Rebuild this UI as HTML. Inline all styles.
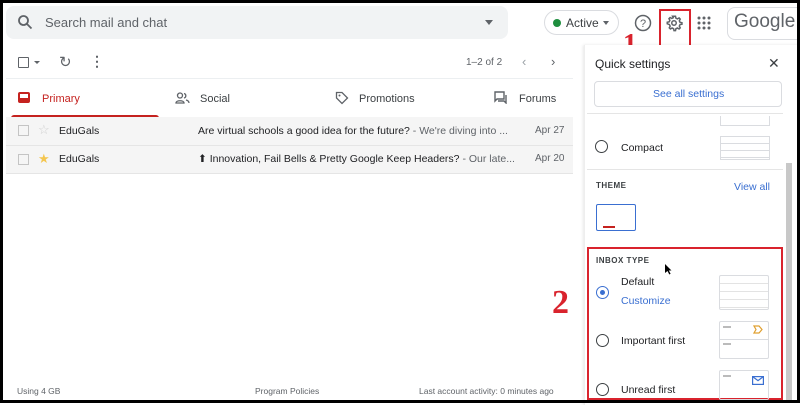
<!DOCTYPE html><html><head><style>
*{margin:0;padding:0;box-sizing:border-box}
body{width:800px;height:403px;background:#fff;position:relative;overflow:hidden;font-family:"Liberation Sans",Arial,sans-serif;color:#202124}
.a{position:absolute}
.t{position:absolute;white-space:nowrap}
</style></head><body>
<div class="a" style="left:6px;top:6px;width:502px;height:33px;background:#f1f3f4;border-radius:8px"></div>
<svg class="a" style="left:17px;top:14px" width="16" height="16" viewBox="0 0 16 16"><circle cx="6.5" cy="6.5" r="4.5" fill="none" stroke="#5f6368" stroke-width="1.8"/><path d="M10 10l4.5 4.5" stroke="#5f6368" stroke-width="1.8"/></svg>
<div class="t" style="left:45px;top:15px;font-size:13px;color:#5f6368">Search mail and chat</div>
<div class="a" style="left:485px;top:20px;border:4px solid transparent;border-top:5px solid #5f6368"></div>
<div class="a" style="left:544px;top:10px;width:75px;height:25px;border:1px solid #dadce0;border-radius:13px"></div>
<div class="a" style="left:553px;top:19px;width:8px;height:8px;border-radius:50%;background:#1e8e3e"></div>
<div class="t" style="left:566px;top:16px;font-size:12px;color:#3c4043">Active</div>
<div class="a" style="left:603px;top:21px;border:3.5px solid transparent;border-top:4px solid #5f6368"></div>
<svg class="a" style="left:634px;top:14px" width="18" height="18" viewBox="0 0 18 18"><circle cx="9" cy="9" r="7.5" fill="none" stroke="#5f6368" stroke-width="1.5"/><text x="9" y="13" font-size="11" text-anchor="middle" fill="#5f6368" font-family="Liberation Sans">?</text></svg>
<svg class="a" style="left:665px;top:14px" width="18" height="18" viewBox="0 0 24 24"><path fill="none" stroke="#5f6368" stroke-width="2" d="M12 3l2 0 .5 2.5 2 1 2.3-1.2 1.5 1.5-1.2 2.3 1 2 2.5.5v2l-2.5.5-1 2 1.2 2.3-1.5 1.5-2.3-1.2-2 1-.5 2.5h-2l-.5-2.5-2-1-2.3 1.2-1.5-1.5 1.2-2.3-1-2L3 13v-2l2.5-.5 1-2-1.2-2.3 1.5-1.5 2.3 1.2 2-1L10 3z"/><circle cx="12" cy="12" r="3" fill="none" stroke="#5f6368" stroke-width="2"/></svg>
<div class="a" style="left:659px;top:9px;width:32px;height:38px;border:2px solid #d9232d"></div>
<svg class="a" style="left:697px;top:16px" width="14" height="14"><g fill="#5f6368"><circle cx="2" cy="2" r="1.5"/><circle cx="7" cy="2" r="1.5"/><circle cx="12" cy="2" r="1.5"/><circle cx="2" cy="7" r="1.5"/><circle cx="7" cy="7" r="1.5"/><circle cx="12" cy="7" r="1.5"/><circle cx="2" cy="12" r="1.5"/><circle cx="7" cy="12" r="1.5"/><circle cx="12" cy="12" r="1.5"/></g></svg>
<div class="a" style="left:727px;top:7px;width:80px;height:33px;border:1px solid #dadce0;border-radius:8px"></div>
<div class="t" style="left:734px;top:11px;font-size:19px;color:#5f6368">Google</div>
<div class="t" style="left:623px;top:29px;font-size:28px;color:#d9232d;font-family:'Liberation Serif',serif;font-weight:bold">1</div>
<div class="a" style="left:18px;top:57px;width:11px;height:11px;border:1.6px solid #5f6368;border-radius:1px"></div>
<div class="a" style="left:34px;top:61px;border:3px solid transparent;border-top:3.5px solid #5f6368"></div>
<div class="t" style="left:59px;top:53px;font-size:15px;color:#5f6368">↻</div>
<div class="t" style="left:90px;top:53px;font-size:14px;color:#5f6368;font-weight:bold">⋮</div>
<div class="t" style="left:466px;top:57px;font-size:10px;color:#5f6368">1–2 of 2</div>
<div class="t" style="left:522px;top:54px;font-size:13px;color:#9aa0a6">‹</div>
<div class="t" style="left:551px;top:54px;font-size:13px;color:#5f6368">›</div>
<div class="a" style="left:6px;top:78px;width:567px;height:1px;background:#eceff1"></div>
<div class="a" style="left:18px;top:92px;width:12px;height:11px;border:2px solid #c5221f;border-radius:2px"></div>
<div class="a" style="left:20px;top:98px;width:8px;height:4px;background:#c5221f"></div>
<div class="t" style="left:42px;top:93px;font-size:11px;color:#c5221f">Primary</div>
<div class="a" style="left:11px;top:115px;width:148px;height:3px;background:#c5221f;border-radius:3px 3px 0 0"></div>
<svg class="a" style="left:175px;top:92px" width="15" height="12" viewBox="0 0 15 12"><circle cx="5" cy="3.5" r="2.5" fill="none" stroke="#5f6368" stroke-width="1.3"/><path d="M1 11c0-3 8-3 8 0z" fill="none" stroke="#5f6368" stroke-width="1.3"/><path d="M9 1.5a2.3 2.3 0 0 1 0 4.5M11 8c2 .5 3 1.5 3 3" fill="none" stroke="#5f6368" stroke-width="1.3"/></svg>
<div class="t" style="left:200px;top:93px;font-size:11px;color:#3c4043">Social</div>
<svg class="a" style="left:335px;top:91px" width="14" height="14" viewBox="0 0 14 14"><path d="M1.5 1.5h5.5l5.5 5.5-5.5 5.5-5.5-5.5z" fill="none" stroke="#5f6368" stroke-width="1.3"/><circle cx="4.5" cy="4.5" r="1" fill="#5f6368"/></svg>
<div class="t" style="left:359px;top:93px;font-size:11px;color:#3c4043">Promotions</div>
<svg class="a" style="left:494px;top:91px" width="14" height="13" viewBox="0 0 14 13"><path d="M1 1h9v7H3l-2 2z M12 4v8l-2-2H4" fill="none" stroke="#5f6368" stroke-width="1.4"/></svg>
<div class="t" style="left:519px;top:93px;font-size:11px;color:#3c4043">Forums</div>
<div class="a" style="left:6px;top:117px;width:567px;height:56px;background:#f5f5f5"></div>
<div class="a" style="left:6px;top:145px;width:567px;height:1px;background:#e5e5e5"></div>
<div class="a" style="left:6px;top:173px;width:567px;height:1px;background:#e5e5e5"></div>
<div class="a" style="left:18px;top:125px;width:11px;height:11px;border:1px solid #c4c4c4"></div>
<div class="a" style="left:18px;top:154px;width:11px;height:11px;border:1px solid #c4c4c4"></div>
<div class="t" style="left:38px;top:122px;font-size:13px;color:#d0d0d0">☆</div>
<div class="t" style="left:38px;top:151px;font-size:13px;color:#f4c64f">★</div>
<div class="t" style="left:59px;top:125px;font-size:10.5px">EduGals</div>
<div class="t" style="left:59px;top:153px;font-size:10.5px">EduGals</div>
<div class="t" style="left:198px;top:125px;font-size:10.5px">Are virtual schools a good idea for the future? <span style="color:#5f6368">- We're diving into ...</span></div>
<div class="t" style="left:198px;top:153px;font-size:10.5px">⬆ Innovation, Fail Bells &amp; Pretty Google Keep Headers? <span style="color:#5f6368">- Our late...</span></div>
<div class="t" style="left:535px;top:125px;font-size:10px;color:#5f6368">Apr 27</div>
<div class="t" style="left:535px;top:153px;font-size:10px;color:#5f6368">Apr 20</div>
<div class="t" style="left:17px;top:386px;font-size:8.5px;color:#5f6368">Using 4 GB</div>
<div class="t" style="left:255px;top:386px;font-size:8.5px;color:#5f6368">Program Policies</div>
<div class="t" style="left:419px;top:386px;font-size:8.5px;color:#5f6368">Last account activity: 0 minutes ago</div>
<div class="t" style="left:552px;top:284px;font-size:34px;color:#d9232d;font-family:'Liberation Serif',serif;font-weight:bold">2</div>
<div class="a" style="left:584px;top:45px;width:216px;height:360px;background:#fff;border-left:1px solid #eee;box-shadow:-1px 0 3px rgba(0,0,0,.1)"></div>
<div class="t" style="left:595px;top:57px;font-size:12px">Quick settings</div>
<div class="t" style="left:768px;top:55px;font-size:14px;color:#3c4043">✕</div>
<div class="a" style="left:594px;top:81px;width:188px;height:26px;border:1px solid #dadce0;border-radius:4px"></div>
<div class="t" style="left:653px;top:88px;font-size:10.5px;color:#3a6fd1">See all settings</div>
<div class="a" style="left:587px;top:113px;width:196px;height:1px;background:#e5e5e5"></div>
<div class="a" style="left:720px;top:116px;width:50px;height:10px;border:1px solid #dadce0;border-top:none"></div>
<div class="a" style="left:595px;top:140px;width:13px;height:13px;border:1.5px solid #3c4043;border-radius:50%"></div>
<div class="t" style="left:621px;top:142px;font-size:10.5px">Compact</div>
<div class="a" style="left:720px;top:136px;width:50px;height:24px;border:1px solid #dadce0;background:repeating-linear-gradient(#fff 0 6px,#dadce0 6px 7px)"></div>
<div class="a" style="left:587px;top:169px;width:196px;height:1px;background:#e5e5e5"></div>
<div class="t" style="left:596px;top:181px;font-size:8px;font-weight:bold;color:#3c4043;letter-spacing:.5px">THEME</div>
<div class="t" style="left:734px;top:181px;font-size:10.5px;color:#3a6fd1">View all</div>
<div class="a" style="left:596px;top:204px;width:40px;height:27px;border:1.5px solid #3a6fd1;border-radius:2px;background:#fff"></div>
<div class="a" style="left:603px;top:226px;width:12px;height:2px;background:#c5221f"></div>
<div class="a" style="left:786px;top:163px;width:6px;height:240px;background:#c8c8c8"></div>
<div class="a" style="left:587px;top:247px;width:196px;height:153px;border:2px solid #d9232d"></div>
<div class="t" style="left:596px;top:256px;font-size:8px;font-weight:bold;color:#3c4043;letter-spacing:.5px">INBOX TYPE</div>
<svg class="a" style="left:664px;top:263px" width="8" height="12" viewBox="0 0 8 12"><path d="M1 1v9l2.5-2 1.8 3.5 1.3-.7-1.8-3.3H7.5z" fill="#000"/></svg>
<div class="a" style="left:596px;top:286px;width:13px;height:13px;border:1.5px solid #3a6fd1;border-radius:50%"></div>
<div class="a" style="left:600px;top:290px;width:5px;height:5px;background:#3a6fd1;border-radius:50%"></div>
<div class="t" style="left:621px;top:276px;font-size:10.5px">Default</div>
<div class="t" style="left:621px;top:295px;font-size:10.5px;color:#3a6fd1">Customize</div>
<div class="a" style="left:719px;top:275px;width:50px;height:35px;border:1px solid #dadce0;border-radius:2px;background:repeating-linear-gradient(#fff 0 7px,#e3e3e3 7px 8px)"></div>
<div class="a" style="left:596px;top:334px;width:13px;height:13px;border:1.5px solid #3c4043;border-radius:50%"></div>
<div class="t" style="left:621px;top:335px;font-size:10.5px">Important first</div>
<div class="a" style="left:719px;top:321px;width:50px;height:38px;border:1px solid #dadce0;border-radius:2px"></div>
<div class="a" style="left:723px;top:326px;width:8px;height:1.5px;background:#bbb"></div>
<div class="a" style="left:723px;top:343px;width:8px;height:1.5px;background:#bbb"></div>
<div class="a" style="left:719px;top:339px;width:50px;height:1px;background:#dadce0"></div>
<svg class="a" style="left:753px;top:325px" width="10" height="9" viewBox="0 0 10 9"><path d="M1 1h5l3 3.5-3 3.5H1l2-3.5z" fill="none" stroke="#e0a030" stroke-width="1.2"/></svg>
<div class="a" style="left:596px;top:383px;width:13px;height:13px;border:1.5px solid #3c4043;border-radius:50%"></div>
<div class="t" style="left:621px;top:384px;font-size:10.5px">Unread first</div>
<div class="a" style="left:719px;top:370px;width:50px;height:30px;border:1px solid #dadce0;border-radius:2px"></div>
<div class="a" style="left:723px;top:375px;width:8px;height:1.5px;background:#bbb"></div>
<svg class="a" style="left:752px;top:376px" width="12" height="9" viewBox="0 0 12 9"><rect x=".6" y=".6" width="10.8" height="7.8" fill="none" stroke="#3a6fd1" stroke-width="1.2"/><path d="M.6.6l5.4 4 5.4-4" fill="none" stroke="#3a6fd1" stroke-width="1.2"/></svg>
<!-- black frame -->
<div class="a" style="left:0;top:0;width:800px;height:3px;background:#000"></div>
<div class="a" style="left:0;top:0;width:3px;height:403px;background:#000"></div>
<div class="a" style="left:797px;top:0;width:3px;height:403px;background:#000"></div>
<div class="a" style="left:0;top:400px;width:800px;height:3px;background:#000"></div>
</body></html>
